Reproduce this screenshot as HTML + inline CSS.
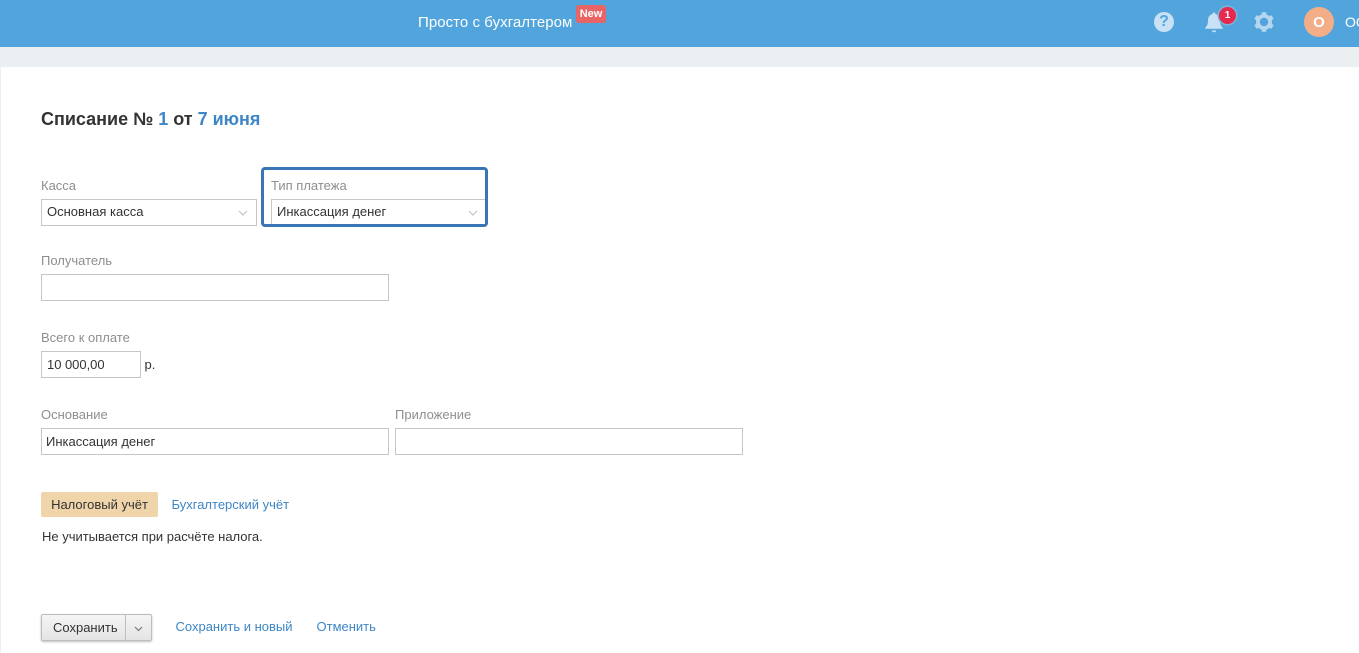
<!DOCTYPE html>
<html lang="ru">
<head>
<meta charset="utf-8">
<style>
html,body{margin:0;padding:0;width:1359px;height:653px;overflow:hidden;background:#fff}
body{font-family:"Liberation Sans",Arial,sans-serif;font-size:13px;color:#333;position:relative}
.a{position:absolute;white-space:nowrap}
.lbl{color:#8e8e8e;font-size:13px;line-height:16px}
.box{position:absolute;box-sizing:border-box;border:1px solid #c6c6c6;background:#fff;height:27px;line-height:25px;padding-left:5px;font-size:13px;color:#333}
.link{color:#3f86c6}
svg{position:absolute;overflow:visible}
</style>
</head>
<body>
<div class="a" style="left:0;top:0;width:1359px;height:47px;background:#52a5dc"></div>
<div class="a" style="left:0;top:47px;width:1359px;height:20px;background:#ebeff2"></div>
<div class="a" style="left:0;top:67px;width:1px;height:586px;background:#ebeff2"></div>

<div class="a" style="left:418px;top:14px;color:#fff;font-size:15px;letter-spacing:.05px;line-height:18px">Просто с бухгалтером</div>
<div class="a" style="left:576px;top:5px;width:30px;height:18px;background:#e96565;border-radius:3px;color:#fff;font-size:11px;font-weight:bold;line-height:18px;text-align:center">New</div>

<div class="a" style="left:1154px;top:12px;width:20px;height:20px;border-radius:50%;background:#c8e1f5;color:#52a5dc;font-weight:bold;font-size:16px;line-height:20px;text-align:center">?</div>

<svg style="left:1204px;top:12px" width="22" height="22" viewBox="0 0 22 22">
<path d="M10 0.5c1 0 1.600.7 1.600 1.600 3 .8 4.400 3.200 4.400 6.200 0 3.600.8 5.600 2.800 7.400v1H1.200v-1c2-1.800 2.800-3.800 2.800-7.400 0-3 1.400-5.400 4.400-6.200C8.400 1.200 9 .5 10 .5z" fill="#c8e1f5"/>
<path d="M7.800 18.500h4.400c-.2 1.200-1.100 1.800-2.200 1.800s-2-.6-2.200-1.800z" fill="#c8e1f5"/>
</svg>
<div class="a" style="left:1219px;top:7px;width:17px;height:17px;border-radius:50%;background:#e5294f;box-shadow:0 0 0 1.500px #7fb3d8;color:#fff;font-size:10px;line-height:17px;text-align:center;font-weight:bold">1</div>

<svg style="left:1253px;top:11px" width="22" height="22" viewBox="0 0 22 22">
<g stroke="#b5d6ef" stroke-width="4.500" stroke-linecap="butt">
<path d="M11 1.200V5M11 17v3.800M2.500 6.100l3.300 1.900M16.200 14l3.300 1.900M2.500 15.900L5.800 14M16.200 8l3.300-1.900"/>
</g>
<circle cx="11" cy="11" r="6.100" fill="none" stroke="#b5d6ef" stroke-width="3.800"/>
</svg>

<div class="a" style="left:1304px;top:7px;width:30px;height:30px;border-radius:50%;background:#f4ae87;color:#fff;font-weight:bold;font-size:15px;line-height:31px;text-align:center">О</div>
<div class="a" style="left:1345px;top:14px;color:#fff;font-size:14px;line-height:17px">ОО</div>

<div class="a" style="left:41px;top:109px;font-size:18px;font-weight:bold;line-height:21px;color:#333">Списание № <span style="color:#3f86c6">1</span> от <span style="color:#3f86c6">7 июня</span></div>

<div class="a lbl" style="left:41px;top:178px">Касса</div>
<div class="box" style="left:41px;top:199px;width:216px;line-height:24px">Основная касса</div>
<svg style="left:238px;top:210px" width="10" height="6" viewBox="0 0 10 6"><path d="M1 1l4 4 4-4" fill="none" stroke="#c4c4c4" stroke-width="1.200"/></svg>

<div class="a" style="left:261px;top:167px;width:227px;height:60px;box-sizing:border-box;border:3px solid #3a75b5;border-radius:4px"></div>
<div class="a lbl" style="left:271px;top:178px">Тип платежа</div>
<div class="box" style="left:271px;top:199px;width:214px;height:25px;border-right:none;border-bottom:none;line-height:24px">Инкассация денег</div>
<svg style="left:468px;top:210px" width="10" height="6" viewBox="0 0 10 6"><path d="M1 1l4 4 4-4" fill="none" stroke="#c4c4c4" stroke-width="1.200"/></svg>

<div class="a lbl" style="left:41px;top:253px">Получатель</div>
<div class="box" style="left:41px;top:274px;width:348px"></div>

<div class="a lbl" style="left:41px;top:330px">Всего к оплате</div>
<div class="box" style="left:41px;top:351px;width:100px;padding-left:5px;letter-spacing:-.03px">10 000,00</div>
<div class="a" style="left:144.500px;top:357px;line-height:16px">р.</div>

<div class="a lbl" style="left:41px;top:407px">Основание</div>
<div class="box" style="left:41px;top:428px;width:348px;padding-left:4px">Инкассация денег</div>
<div class="a lbl" style="left:395px;top:407px">Приложение</div>
<div class="box" style="left:395px;top:428px;width:348px"></div>

<div class="a" style="left:41px;top:492px;width:117px;height:25px;background:#f0d5ab;border-radius:2px;text-align:center;line-height:25px;color:#333">Налоговый учёт</div>
<div class="a link" style="left:171.500px;top:497px;line-height:16px">Бухгалтерский учёт</div>
<div class="a" style="left:42px;top:529px;line-height:16px;letter-spacing:-.01px">Не учитывается при расчёте налога.</div>

<div class="a" style="left:41px;top:614px;width:111px;height:27px;box-sizing:border-box;border:1px solid #bdbdbd;border-radius:2px;background:linear-gradient(#f5f5f5,#e4e4e4);box-shadow:0 1px 2px rgba(0,0,0,.25)"></div>
<div class="a" style="left:125px;top:615px;width:1px;height:25px;background:#bdbdbd"></div>
<div class="a" style="left:53px;top:620px;line-height:16px;color:#333">Сохранить</div>
<svg style="left:134px;top:626px" width="9" height="6" viewBox="0 0 9 6"><path d="M1 1l3.500 3.500L8 1" fill="none" stroke="#777" stroke-width="1.200"/></svg>
<div class="a link" style="left:175.500px;top:619px;line-height:16px">Сохранить и новый</div>
<div class="a link" style="left:316.500px;top:619px;line-height:16px">Отменить</div>
</body>
</html>
